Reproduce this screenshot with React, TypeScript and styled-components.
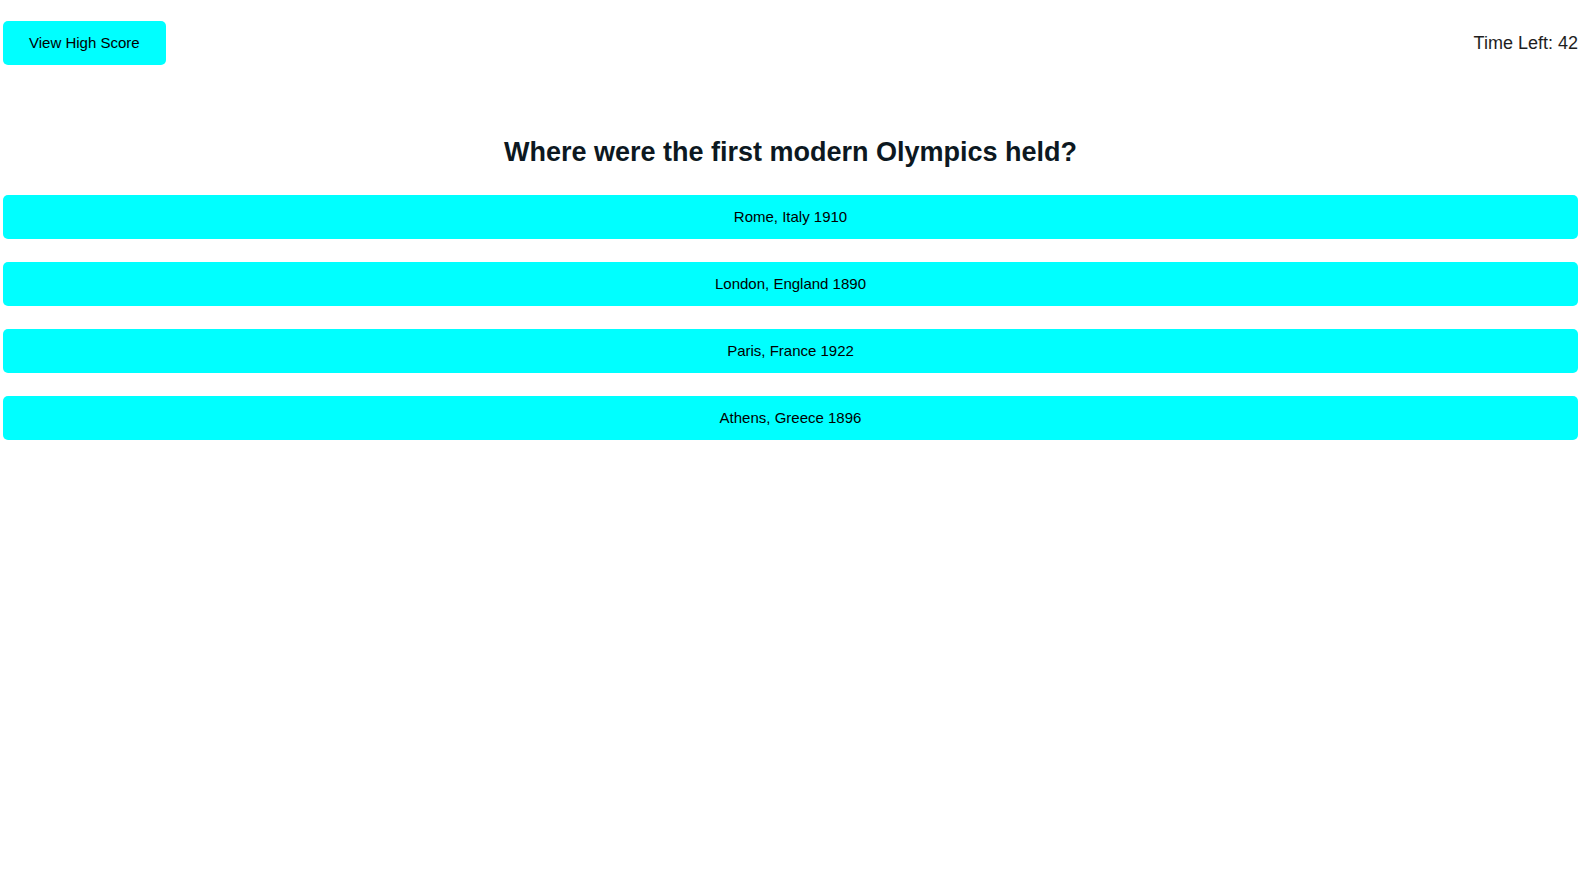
import React from "react";
import styled, { createGlobalStyle } from "styled-components";

const GlobalStyle = createGlobalStyle`
  html, body {
    margin: 0;
    padding: 0;
    background: #ffffff;
    font-family: "Liberation Sans", Arial, sans-serif;
  }
`;

const Page = styled.div`
  padding: 21px 7px 0 3px;
`;

const Header = styled.header`
  display: flex;
  justify-content: space-between;
  align-items: center;
`;

const CyanButton = styled.button<{ $wide?: boolean }>`
  background: #00ffff;
  color: #000;
  border: none;
  border-radius: 5px;
  font-family: "Liberation Sans", Arial, sans-serif;
  font-size: 15px;
  line-height: 17px;
  padding: ${(p) => (p.$wide ? "13px 0 14px" : "13px 26px 14px")};
  width: ${(p) => (p.$wide ? "100%" : "auto")};
  text-align: center;
  cursor: pointer;
`;

const Timer = styled.div`
  font-size: 18px;
  color: #1e1e1e;
`;

const Question = styled.h1`
  margin: 72px 0 27px;
  text-align: center;
  font-size: 27px;
  font-weight: bold;
  color: #0c1821;
`;

const Answers = styled.div`
  display: flex;
  flex-direction: column;
  gap: 23px;
`;

const answers = [
  "Rome, Italy 1910",
  "London, England 1890",
  "Paris, France 1922",
  "Athens, Greece 1896",
];

export default function App() {
  return (
    <>
      <GlobalStyle />
      <Page>
        <Header>
          <CyanButton>View High Score</CyanButton>
          <Timer>Time Left: 42</Timer>
        </Header>
        <Question>Where were the first modern Olympics held?</Question>
        <Answers>
          {answers.map((a) => (
            <CyanButton key={a} $wide>
              {a}
            </CyanButton>
          ))}
        </Answers>
      </Page>
    </>
  );
}
